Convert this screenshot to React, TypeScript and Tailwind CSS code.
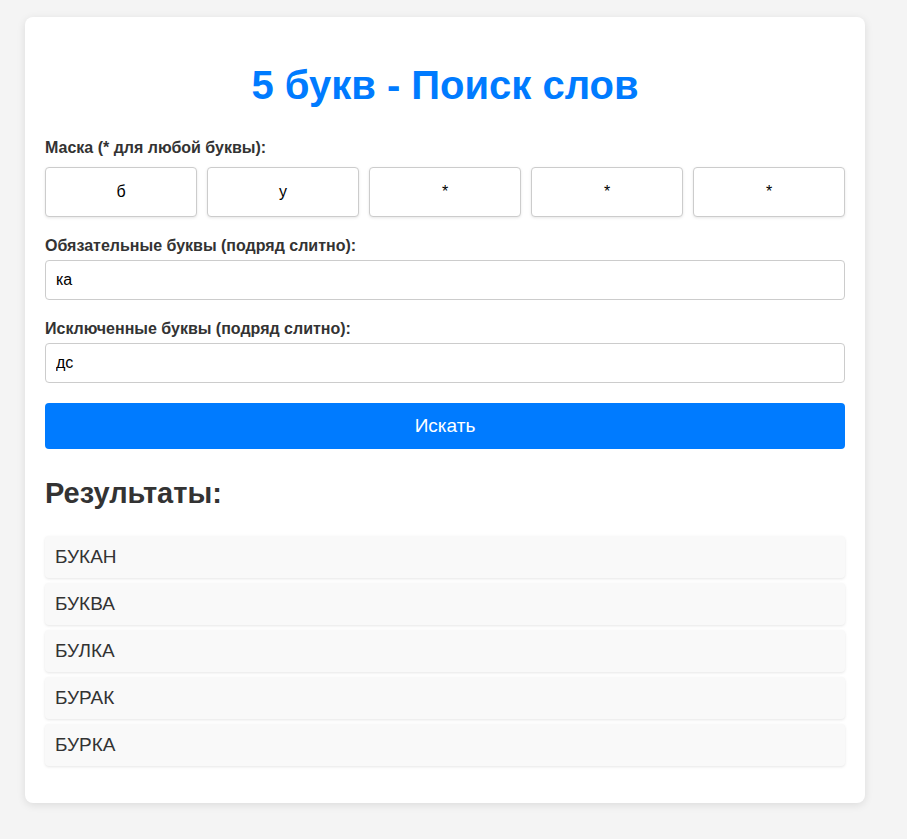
import { useState } from "react";

const results = ["БУКАН", "БУКВА", "БУЛКА", "БУРАК", "БУРКА"];

export default function App() {
  const [mask, setMask] = useState(["б", "у", "*", "*", "*"]);
  const [required, setRequired] = useState("ка");
  const [excluded, setExcluded] = useState("дс");

  return (
    <div className="min-h-[839px] bg-[#f4f4f4] pt-[17px] pb-[37px] font-['Liberation_Sans',Arial,sans-serif] text-[#333]">
      <div className="ml-[25px] w-[840px] rounded-lg bg-white p-5 shadow-[0_2px_8px_rgba(0,0,0,0.1)]">
        <h1 className="mt-[25px] text-center text-[40px] font-bold leading-[46px] text-[#007bff]">
          5 букв - Поиск слов
        </h1>

        {/* Mask */}
        <label className="mt-[31px] mb-[10px] block text-[16px] font-bold leading-[18px]">
          Маска (* для любой буквы):
        </label>
        <div className="flex gap-[10px]">
          {mask.map((ch, i) => (
            <input
              key={i}
              value={ch}
              maxLength={1}
              onChange={(e) => {
                const next = [...mask];
                next[i] = e.target.value;
                setMask(next);
              }}
              className="h-[50px] w-[152px] rounded border border-[#ccc] bg-white text-center text-[16px] text-black shadow-[0_1px_3px_rgba(0,0,0,0.1)] outline-none"
            />
          ))}
        </div>

        {/* Required */}
        <label className="mt-5 mb-[5px] block text-[16px] font-bold leading-[18px]">
          Обязательные буквы (подряд слитно):
        </label>
        <input
          value={required}
          onChange={(e) => setRequired(e.target.value)}
          className="block h-10 w-full rounded border border-[#ccc] px-[10px] text-[16px] text-black outline-none"
        />

        {/* Excluded */}
        <label className="mt-5 mb-[5px] block text-[16px] font-bold leading-[18px]">
          Исключенные буквы (подряд слитно):
        </label>
        <input
          value={excluded}
          onChange={(e) => setExcluded(e.target.value)}
          className="block h-10 w-full rounded border border-[#ccc] px-[10px] text-[16px] text-black outline-none"
        />

        <button className="mt-5 block h-[46px] w-full rounded bg-[#007bff] text-[19px] text-white">
          Искать
        </button>

        <h2 className="mt-7 text-[29px] font-bold leading-[33px]">Результаты:</h2>
        <ul className="mt-[26px] mb-[17px] flex flex-col gap-[5px]">
          {results.map((w) => (
            <li
              key={w}
              className="flex h-[42px] items-center rounded bg-[#f9f9f9] px-[10px] text-[19px] shadow-[0_1px_3px_rgba(0,0,0,0.1)]"
            >
              {w}
            </li>
          ))}
        </ul>
      </div>
    </div>
  );
}
